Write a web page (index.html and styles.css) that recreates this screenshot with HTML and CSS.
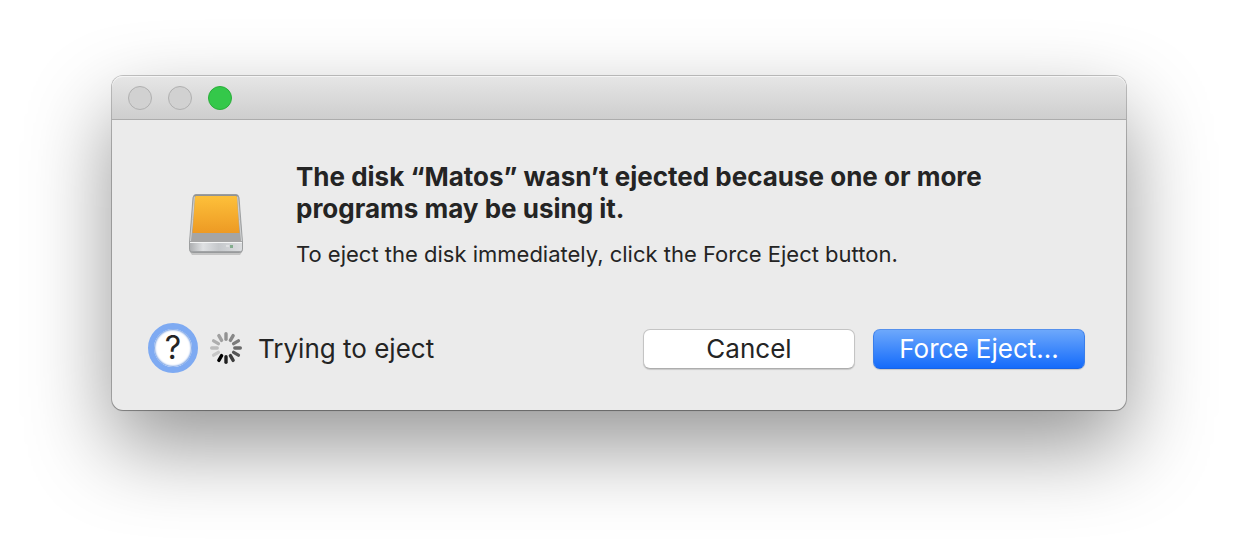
FILE: index.html
```html
<!DOCTYPE html>
<html lang="en">
<head>
<meta charset="utf-8">
<meta name="viewport" content="width=device-width, initial-scale=1">
<title>Eject disk</title>
<link rel="stylesheet" href="styles.css">
</head>
<body>
<main class="desktop">
  <section class="dialog" role="alertdialog" aria-labelledby="title" aria-describedby="detail">
    <header class="titlebar">
      <button class="light" type="button" aria-label="Close" disabled></button>
      <button class="light" type="button" aria-label="Minimize" disabled></button>
      <button class="light light-zoom" type="button" aria-label="Zoom"></button>
    </header>
    <div class="message">
      <svg class="disk" viewBox="0 0 60 64" aria-hidden="true">
        <defs>
          <linearGradient id="face" x1="0" y1="0" x2="0" y2="1"><stop offset="0" stop-color="#fdc03a"/><stop offset="1" stop-color="#ed9a24"/></linearGradient>
          <linearGradient id="front" x1="0" y1="0" x2="1" y2="0"><stop offset="0" stop-color="#aeb0b2"/><stop offset=".25" stop-color="#dfe1e3"/><stop offset=".55" stop-color="#c5c8cb"/><stop offset="1" stop-color="#dcdee0"/></linearGradient>
          <linearGradient id="shell" x1="0" y1="0" x2="0" y2="1"><stop offset="0" stop-color="#8e9092"/><stop offset=".3" stop-color="#b9bbbd"/><stop offset="1" stop-color="#a0a1a3"/></linearGradient>
        </defs>
        <path d="M4 60h52l-2 3H6z" fill="#aaa" opacity=".6"/>
        <path d="M10 2.500h40q2.500 0 3 3L56.500 50v7.500q0 3-3 3h-47q-3 0-3-3V50L7 5.500q.5-3 3-3z" fill="url(#shell)" stroke="#929496" stroke-width=".8"/>
        <path d="M8 5h44L55 50H5z" fill="#a5a5a5"/>
        <path d="M8.300 4.500Q7 28 4.500 49M51.700 4.500Q53 28 55.500 49" fill="none" stroke="#d0d2d3" stroke-width="1"/>
        <path d="M10 4h40q.8 0 .9 1L53.500 41H6.500L9.100 5q.1-1 .9-1z" fill="url(#face)"/>
        <path d="M4 50h52v7q0 2.500-3 2.500H7q-3 0-3-2.500z" fill="url(#front)"/>
        <path d="M4 50.500h52" stroke="#f4f5f5" stroke-width="1"/>
        <path d="M6 59.500h48" stroke="#a2a4a6" stroke-width="1"/>
        <rect x="44" y="53" width="3" height="3" fill="#83ad8d"/>
        <path d="M40 54h3" stroke="#eef0f0" stroke-width="1"/>
      </svg>
      <div class="copy">
        <h1 class="title" id="title">The disk “Matos” wasn’t ejected because one or more programs may be using it.</h1>
        <p class="detail" id="detail">To eject the disk immediately, click the Force Eject button.</p>
      </div>
    </div>
    <footer class="actions">
      <button class="help" type="button" aria-label="Help">?</button>
      <svg class="spinner" viewBox="-16 -16 32 32" aria-hidden="true">
        <g stroke-width="3.400" stroke-linecap="round">
          <path d="M0-8.800v-5.500" stroke="#929292"/>
          <path d="M0-8.800v-5.500" stroke="#888" transform="rotate(30)"/>
          <path d="M0-8.800v-5.500" stroke="#7b7b7b" transform="rotate(60)"/>
          <path d="M0-8.800v-5.500" stroke="#6b6b6b" transform="rotate(90)"/>
          <path d="M0-8.800v-5.500" stroke="#555" transform="rotate(120)"/>
          <path d="M0-8.800v-5.500" stroke="#3d3d3d" transform="rotate(150)"/>
          <path d="M0-8.800v-5.500" stroke="#202020" transform="rotate(180)"/>
          <path d="M0-8.800v-5.500" stroke="#000" transform="rotate(210)"/>
          <path d="M0-8.800v-5.500" stroke="#c6c6c6" transform="rotate(240)"/>
          <path d="M0-8.800v-5.500" stroke="#bcbcbc" transform="rotate(270)"/>
          <path d="M0-8.800v-5.500" stroke="#aeaeae" transform="rotate(300)"/>
          <path d="M0-8.800v-5.500" stroke="#a0a0a0" transform="rotate(330)"/>
        </g>
      </svg>
      <span class="status" role="status">Trying to eject</span>
      <div class="choices">
        <button class="button" type="button">Cancel</button>
        <button class="button button-primary" type="button">Force Eject...</button>
      </div>
    </footer>
  </section>
</main>
</body>
</html>
```
FILE: styles.css
```css
* {
  box-sizing: border-box;
}

body {
  margin: 0;
  background: #fff;
  color: #242424;
  font-family: Inter, "Liberation Sans", sans-serif;
}

.desktop {
  min-height: 100vh;
  padding: 76px 112px 148px;
  overflow: hidden;
}

.dialog {
  border-radius: 11px;
  background: #ebebeb;
  box-shadow: 0 0 0 1px rgba(0, 0, 0, 0.22), 0 1px 1px rgba(0, 0, 0, 0.2), 0 36px 84px rgba(0, 0, 0, 0.42);
}

.titlebar {
  display: flex;
  gap: 16px;
  align-items: center;
  height: 44px;
  padding: 0 16px;
  border-bottom: 1px solid #acacac;
  border-radius: 11px 11px 0 0;
  background: linear-gradient(#e6e6e6, #cecece);
  box-shadow: inset 0 1px 0 #f5f5f5;
}

.light {
  width: 24px;
  height: 24px;
  padding: 0;
  border: 1px solid #b0b0b0;
  border-radius: 50%;
  background: #d1d1d1;
}

.light-zoom {
  border-color: #2aae3a;
  background: #34c84a;
}

.message {
  display: flex;
  gap: 50px;
  padding: 41px 76px 0 74px;
}

.disk {
  flex: none;
  width: 60px;
  height: 64px;
  margin-top: 31px;
}

.title {
  margin: 0;
  font-size: 26px;
  font-weight: 700;
  line-height: 32px;
}

.detail {
  margin: 15px 0 0;
  font-size: 22px;
  line-height: 28px;
}

.actions {
  display: flex;
  align-items: center;
  padding: 54px 41px 36px 36px;
}

.help {
  width: 50px;
  height: 50px;
  margin: 1px 0;
  padding: 0;
  border: 6px solid #7eaaf2;
  border-radius: 50%;
  background: #fff;
  box-shadow: inset 0 0 2px 1px #6795df;
  color: #242424;
  font: 400 32px/36px Inter, "Liberation Sans", sans-serif;
}

.spinner {
  flex: none;
  width: 32px;
  height: 32px;
  margin: 0 16px 0 12px;
}

.status {
  margin-right: auto;
  padding-top: 2px;
  font-size: 26px;
  line-height: 32px;
}

.choices {
  display: flex;
  gap: 18px;
  padding-top: 2px;
}

.button {
  width: 212px;
  height: 40px;
  padding: 0;
  border: 1px solid #c4c4c4;
  border-bottom-color: #adadad;
  border-radius: 7px;
  background: #fff;
  box-shadow: 0 1px 1px rgba(0, 0, 0, 0.15);
  color: #242424;
  font: 400 26px/32px Inter, "Liberation Sans", sans-serif;
}

.button-primary {
  border-color: #5590ec #3a7eea #1763e6;
  background: linear-gradient(#6da8fb, #146bfb);
  color: #fff;
}
```
